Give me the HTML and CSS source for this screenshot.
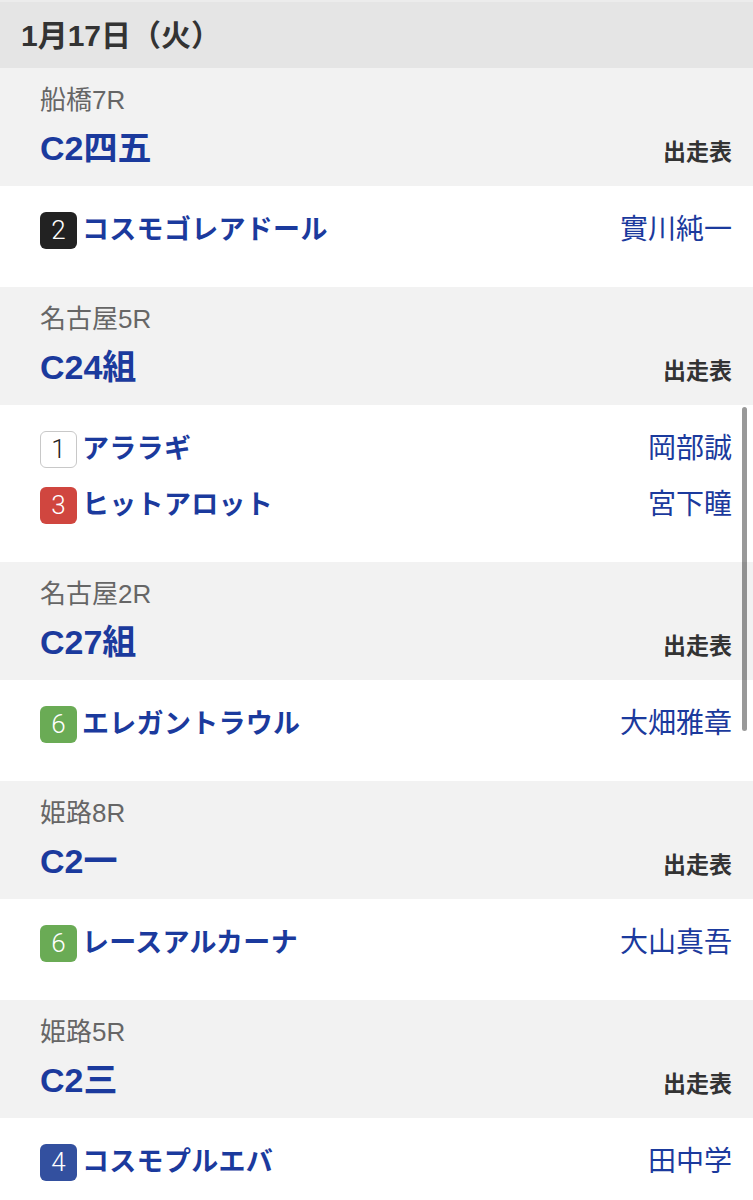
FILE: index.html
```html
<!DOCTYPE html>
<html lang="ja">
<head>
  <meta charset="UTF-8" />
  <meta name="viewport" content="width=device-width, initial-scale=1.0"/>
  <title>騎乗予定</title>
  <link rel="stylesheet" href="styles.css">
</head>
<body>
  <div class="schedule">
    <h2 class="day-title">1月17日（火）</h2>

    <div class="race-head">
      <div class="venue">船橋7R</div>
      <div class="race-row">
        <span class="race-name">C2四五</span>
        <span class="card-link">出走表</span>
      </div>
    </div>
    <div class="entries">
      <div class="entry">
        <span class="num num-2">2</span>
        <span class="horse">コスモゴレアドール</span>
        <span class="jockey">實川純一</span>
      </div>
    </div>

    <div class="race-head">
      <div class="venue">名古屋5R</div>
      <div class="race-row">
        <span class="race-name">C24組</span>
        <span class="card-link">出走表</span>
      </div>
    </div>
    <div class="entries">
      <div class="entry">
        <span class="num num-1">1</span>
        <span class="horse">アララギ</span>
        <span class="jockey">岡部誠</span>
      </div>
      <div class="entry">
        <span class="num num-3">3</span>
        <span class="horse">ヒットアロット</span>
        <span class="jockey">宮下瞳</span>
      </div>
    </div>

    <div class="race-head">
      <div class="venue">名古屋2R</div>
      <div class="race-row">
        <span class="race-name">C27組</span>
        <span class="card-link">出走表</span>
      </div>
    </div>
    <div class="entries">
      <div class="entry">
        <span class="num num-6">6</span>
        <span class="horse">エレガントラウル</span>
        <span class="jockey">大畑雅章</span>
      </div>
    </div>

    <div class="race-head">
      <div class="venue">姫路8R</div>
      <div class="race-row">
        <span class="race-name">C2一</span>
        <span class="card-link">出走表</span>
      </div>
    </div>
    <div class="entries">
      <div class="entry">
        <span class="num num-6">6</span>
        <span class="horse">レースアルカーナ</span>
        <span class="jockey">大山真吾</span>
      </div>
    </div>

    <div class="race-head">
      <div class="venue">姫路5R</div>
      <div class="race-row">
        <span class="race-name">C2三</span>
        <span class="card-link">出走表</span>
      </div>
    </div>
    <div class="entries">
      <div class="entry">
        <span class="num num-4">4</span>
        <span class="horse">コスモプルエバ</span>
        <span class="jockey">田中学</span>
      </div>
    </div>
  </div>
  <div class="scroll-thumb"></div>
</body>
</html>
```

FILE: styles.css
```css
:root {
  --blue: #1b3a9d;
  --text: #333;
  --muted: #666;
  --day-bg: #e5e5e5;
  --head-bg: #f2f2f2;
}
body {
  margin: 0;
  font-family: 'Liberation Sans', 'Noto Sans CJK JP', sans-serif;
  background: #fff;
  color: var(--text);
  overflow: hidden;
}
.schedule {
  border-top: 2px solid #ececec;
}
.day-title {
  margin: 0;
  background: var(--day-bg);
  height: 66px;
  box-sizing: border-box;
  display: flex;
  align-items: center;
  padding: 0 0 5px 21px;
  font-size: 30px;
  font-weight: 700;
  color: var(--text);
}
.race-head {
  height: 118px;
  box-sizing: border-box;
  background: var(--head-bg);
  padding: 16px 21px 0 40px;
}
.venue {
  height: 32px;
  line-height: 32px;
  font-size: 26px;
  color: var(--muted);
}
.race-row {
  height: 44px;
  display: flex;
  justify-content: space-between;
  align-items: baseline;
  margin-top: 10px;
  line-height: 44px;
}
.race-name {
  font-size: 34px;
  font-weight: 700;
  color: var(--blue);
}
.card-link {
  font-size: 23px;
  font-weight: 700;
  color: var(--text);
}
.entries {
  display: flex;
  flex-direction: column;
  gap: 18px;
  padding: 25px 21px 38px 40px;
}
.entry {
  display: flex;
  align-items: center;
  height: 38px;
  line-height: 38px;
}
.num {
  width: 37px;
  height: 37px;
  box-sizing: border-box;
  border-radius: 6px;
  display: flex;
  align-items: center;
  justify-content: center;
  font-family: 'Roboto', sans-serif;
  font-weight: 300;
  font-size: 26px;
  color: #fff;
  margin-right: 5px;
}
.num-1 { background: #fff; border: 1.5px solid #c8c8c8; color: #222; }
.num-2 { background: #222; }
.num-3 { background: #d0463f; }
.num-4 { background: #33509f; }
.num-6 { background: #6aab55; }
.horse {
  flex: 1;
  font-size: 27px;
  font-weight: 700;
  letter-spacing: 0.3px;
  color: var(--blue);
}
.jockey {
  font-size: 28px;
  color: var(--blue);
}
.scroll-thumb {
  position: fixed;
  right: 6px;
  top: 407px;
  width: 5px;
  height: 324px;
  border-radius: 3px;
  background: rgba(0, 0, 0, 0.4);
}
```
